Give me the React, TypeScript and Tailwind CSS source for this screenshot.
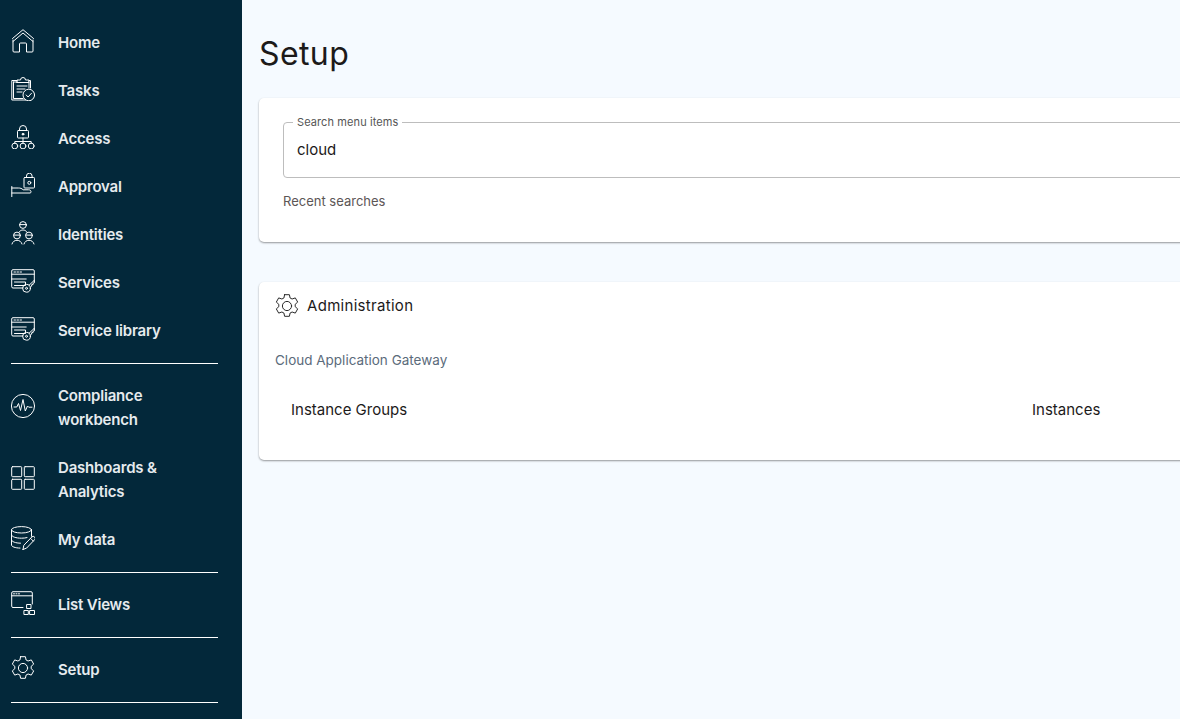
import type { ReactNode } from "react";

const FONT = "font-['Inter','Noto_Sans',sans-serif]";

function Icon({ children }: { children: ReactNode }) {
  return (
    <svg
      viewBox="0 0 24 24"
      width="24"
      height="24"
      fill="none"
      stroke="currentColor"
      strokeWidth="1"
      strokeLinecap="round"
      strokeLinejoin="round"
      className="shrink-0"
    >
      {children}
    </svg>
  );
}

const HomeIcon = () => (
  <Icon>
    <path d="M1.5 9.5 12 .7l10.5 8.8" />
    <path d="M2 12.5 12 4l10 8.5" />
    <path d="M2 11v11a1 1 0 0 0 1 1h5.5v-8a1 1 0 0 1 1-1h5a1 1 0 0 1 1 1v8H21a1 1 0 0 0 1-1V11" />
  </Icon>
);
const TasksIcon = () => (
  <Icon>
    <path d="M6 3.5H.8V23h14" />
    <path d="M2.5 5H6M2.5 5v16.5H12" />
    <path d="M6 5.5V3h3.5a2.5 2.5 0 0 1 5 0H18v2.5H6Z" />
    <path d="M18 3.5h1.5V11M17.5 5H18v6" />
    <path d="M6 9h10M6 12h8M6 15h5" />
    <circle cx="17.8" cy="18" r="5.8" />
    <path d="m15.2 18 1.9 2 3.4-3.8" />
  </Icon>
);
const AccessIcon = () => (
  <Icon>
    <rect x="6.5" y="5.5" width="11" height="7.5" rx="0.8" />
    <path d="M8.5 5.5V4a3.5 3.5 0 0 1 7 0v1.5" />
    <circle cx="12" cy="9.2" r="0.9" fill="currentColor" />
    <path d="M12 13v3.5M3.8 18.5v-2h16.4v2M12 16.5v2" />
    <circle cx="3.8" cy="21" r="2.9" />
    <circle cx="12" cy="21" r="2.9" />
    <circle cx="20.2" cy="21" r="2.9" />
  </Icon>
);
const ApprovalIcon = () => (
  <Icon>
    <path d="M.8 13.5v10.2M.8 15h6.5c2 0 3.5.4 4.8 1.8h5.5c1.5 0 2.4.8 2.4 1.9 0 .9-.3 1.3-.9 1.3H.8" />
    <rect x="13" y="4.5" width="10.5" height="10.5" rx="0.8" />
    <path d="M15.5 4.5V3a2.8 2.8 0 0 1 5.6 0v1.5" />
    <circle cx="18.3" cy="9.8" r="1.5" />
  </Icon>
);
const IdentitiesIcon = () => (
  <Icon>
    <circle cx="12" cy="4" r="3.4" />
    <path d="M8.7 3.6h6.6" />
    <path d="M8 11.2c1-1.6 2.4-2.2 4-2.2s3 .6 4 2.2" />
    <circle cx="6" cy="14.5" r="3.4" />
    <path d="M2.7 14.1h6.6" />
    <path d="M1 23c.6-2.4 2.6-3.7 5-3.7s4.3 1.3 5 3.7" />
    <circle cx="18" cy="14.5" r="3.4" />
    <path d="M14.7 14.1h6.6" />
    <path d="M13 23c.6-2.4 2.6-3.7 5-3.7s4.3 1.3 5 3.7" />
  </Icon>
);
const ServicesIcon = () => (
  <Icon>
    <path d="M12 19H2a1.3 1.3 0 0 1-1.3-1.3V2A1.3 1.3 0 0 1 2 .7h20A1.3 1.3 0 0 1 23.3 2v10" />
    <path d="M.7 5.2h22.6" />
    <path d="M3 3h1.5M6 3h1.5M9 3h1.5" />
    <path d="M.7 10h14.5M3.5 13h11v3.5h-11" />
    <circle cx="15.5" cy="19.3" r="3.9" />
    <circle cx="15.5" cy="19.3" r="1" />
    <path d="m18 16.3 5.3-5 .2 2.4-1.3.3-.1 1.5-1.4.2-.1 1.5-1 .7" />
  </Icon>
);
const PulseIcon = () => (
  <Icon>
    <circle cx="12" cy="12" r="11.6" />
    <path d="M3 13h2.8l1.7-3.5 2 7L12 5.5l2.3 11.5 2.2-5 1.2 1.2h3.3" />
  </Icon>
);
const GridIcon = () => (
  <Icon>
    <rect x="0.7" y="0.7" width="10" height="10" rx="0.8" />
    <rect x="13.3" y="0.7" width="10" height="10" rx="0.8" />
    <rect x="0.7" y="13.3" width="10" height="10" rx="0.8" />
    <rect x="13.3" y="13.3" width="10" height="10" rx="0.8" />
  </Icon>
);
const DataIcon = () => (
  <Icon>
    <ellipse cx="10.5" cy="3.8" rx="10" ry="3.2" />
    <path d="M.5 3.8V19c0 1.6 3.5 3 8.5 3.1" />
    <path d="M.5 9c0 1.7 4.4 3.2 10 3.2 2.2 0 4-.2 5.5-.6" />
    <path d="M.5 14c0 1.7 4 3.1 9 3.2" />
    <path d="M20.5 3.8v6.5" />
    <path d="m12 23.5.8-4.2 8-8.3a1.9 1.9 0 0 1 2.8 2.7l-8 8.4-3.6 1.4Z" />
    <path d="m19.5 12.3 2.8 2.8" />
  </Icon>
);
const ListViewIcon = () => (
  <Icon>
    <path d="M12 16.5H2A1.3 1.3 0 0 1 .7 15.2V2A1.3 1.3 0 0 1 2 .7h18A1.3 1.3 0 0 1 21.3 2v11" />
    <path d="M.7 4.8h20.6" />
    <path d="M2.5 2.8h1M5 2.8h1M7.5 2.8h1" />
    <rect x="16" y="13.5" width="4" height="4" />
    <rect x="13.3" y="19.5" width="4" height="4" />
    <rect x="19" y="19.5" width="4.5" height="4" />
  </Icon>
);
const GearIcon = () => (
  <Icon>
    <circle cx="12" cy="12" r="4.6" />
    <path d="M9.6.7h4.8l.7 3.3 2 1 3.2-1.1 2.4 4.2-2.5 2.2v2.4l2.5 2.2-2.4 4.2-3.2-1.1-2 1-.7 3.3H9.6L8.9 19l-2-1-3.2 1.1-2.4-4.2 2.5-2.2v-2.4L1.3 8.1l2.4-4.2L6.9 5l2-1 .7-3.3Z" />
  </Icon>
);

function NavItem({ icon, label }: { icon: ReactNode; label: ReactNode }) {
  return (
    <div className="flex items-center px-[11px] py-3">
      <div className="w-[47px] shrink-0 flex -mt-1">{icon}</div>
      <span className="text-[15px] leading-6 font-semibold tracking-[-0.2px] text-[#e6ebee]">{label}</span>
    </div>
  );
}

const Divider = () => <div className="h-px bg-white ml-[11px] mr-6 my-2" />;

export default function App() {
  return (
    <div className={`${FONT} flex w-[1180px] h-[719px] overflow-hidden bg-[#f5faff]`}>
      <aside className="w-[242px] shrink-0 bg-[#03283a] pt-[19px] text-white">
        <NavItem icon={<HomeIcon />} label="Home" />
        <NavItem icon={<TasksIcon />} label="Tasks" />
        <NavItem icon={<AccessIcon />} label="Access" />
        <NavItem icon={<ApprovalIcon />} label="Approval" />
        <NavItem icon={<IdentitiesIcon />} label="Identities" />
        <NavItem icon={<ServicesIcon />} label="Services" />
        <NavItem icon={<ServicesIcon />} label="Service library" />
        <Divider />
        <NavItem icon={<PulseIcon />} label={<>Compliance<br />workbench</>} />
        <NavItem icon={<GridIcon />} label={<>Dashboards &amp;<br />Analytics</>} />
        <NavItem icon={<DataIcon />} label="My data" />
        <Divider />
        <NavItem icon={<ListViewIcon />} label="List Views" />
        <Divider />
        <NavItem icon={<GearIcon />} label="Setup" />
        <Divider />
      </aside>

      <main className="pl-[17px] pt-[34px] shrink-0">
        <h1 className="text-[32px] leading-10 font-normal tracking-[0.4px] text-[#1c1a1a]">Setup</h1>

        <section className="w-[1480px] h-[144px] mt-6 bg-white rounded-[5px] shadow-[0_1px_2px_rgba(0,0,0,0.4)] px-6 pt-6">
          <fieldset className="h-[62px] border border-[#bdbdbd] rounded-[4px] pl-[9px] -mt-[6px]">
            <legend className="text-[11px] leading-3 tracking-[0.1px] text-[#555] px-1">Search menu items</legend>
            <div className="pl-1 pt-[10px] text-[15px] leading-6 text-[#1c1a1a]">cloud</div>
          </fieldset>
          <p className="mt-[13px] text-[13px] leading-5 text-[#5c5656]">Recent searches</p>
        </section>

        <section className="w-[1480px] h-[178px] mt-10 bg-white rounded-[5px] shadow-[0_1px_2px_rgba(0,0,0,0.4)] px-4 pt-3">
          <div className="flex items-center gap-2 text-[#2a2a2a]">
            <GearIcon />
            <span className="-mt-px text-[15px] leading-6 tracking-[0.3px] text-[#1c1a1a]">Administration</span>
          </div>
          <p className="mt-[32px] text-[13.5px] leading-5 text-[#5b6b7b]">Cloud Application Gateway</p>
          <div className="grid grid-cols-[741px_741px] mt-[28px] pl-4 text-[15px] leading-6 text-[#1c1a1a]">
            <span>Instance Groups</span>
            <span>Instances</span>
          </div>
        </section>
      </main>
    </div>
  );
}
